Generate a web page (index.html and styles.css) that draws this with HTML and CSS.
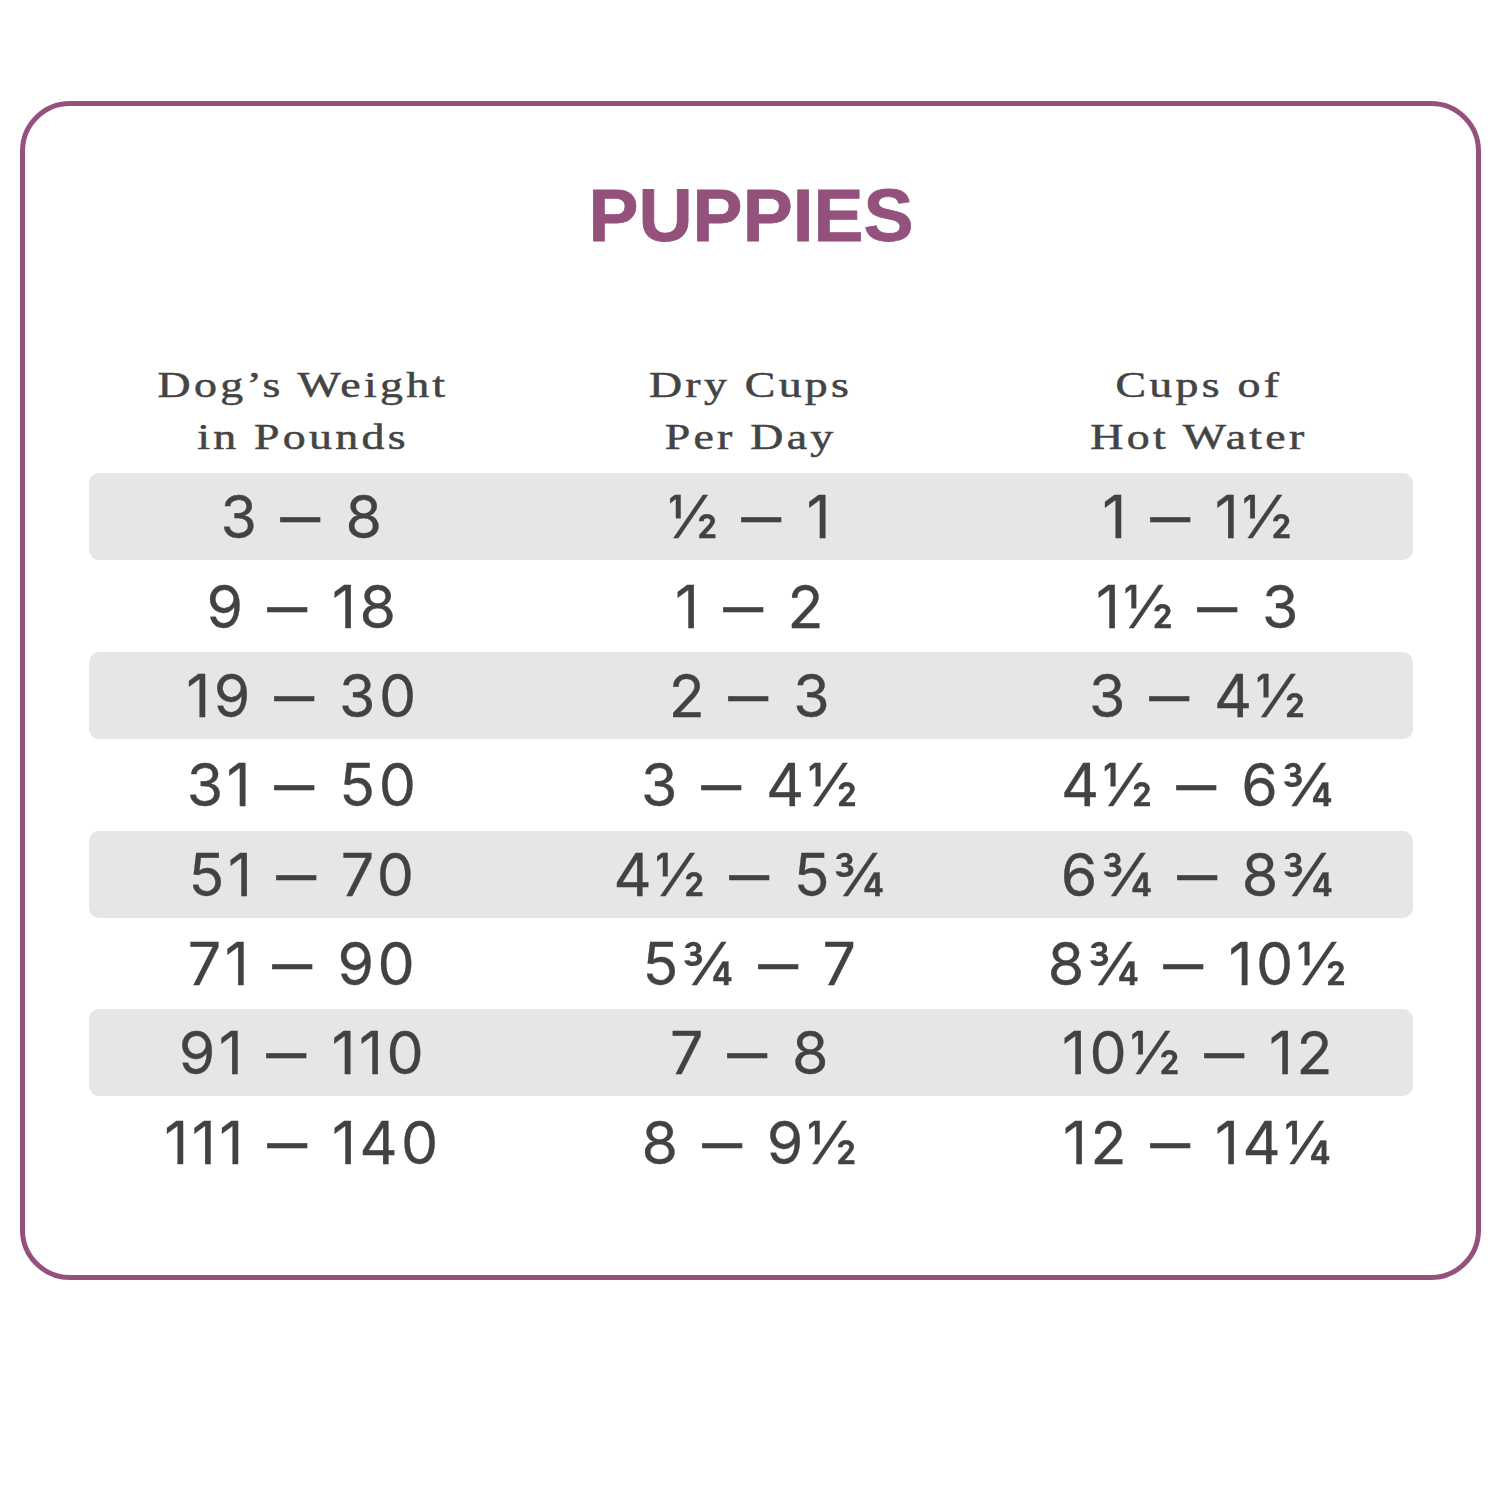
FILE: index.html
```html
<!DOCTYPE html>
<html lang="en">
<head>
<meta charset="utf-8">
<title>Puppies feeding chart</title>
<link rel="stylesheet" href="styles.css">
</head>
<body>
<section class="card">
  <h1 class="title">PUPPIES</h1>
  <div class="table">
    <div class="head">
      <div class="th"><span class="thx">Dog’s Weight<br>in Pounds</span></div>
      <div class="th"><span class="thx">Dry Cups<br>Per Day</span></div>
      <div class="th"><span class="thx">Cups of<br>Hot Water</span></div>
    </div>
    <div class="row shade"><div class="td">3 <span class="dash">–</span> 8</div><div class="td">½ <span class="dash">–</span> 1</div><div class="td">1 <span class="dash">–</span> 1½</div></div>
    <div class="row"><div class="td">9 <span class="dash">–</span> 18</div><div class="td">1 <span class="dash">–</span> 2</div><div class="td">1½ <span class="dash">–</span> 3</div></div>
    <div class="row shade"><div class="td">19 <span class="dash">–</span> 30</div><div class="td">2 <span class="dash">–</span> 3</div><div class="td">3 <span class="dash">–</span> 4½</div></div>
    <div class="row"><div class="td">31 <span class="dash">–</span> 50</div><div class="td">3 <span class="dash">–</span> 4½</div><div class="td">4½ <span class="dash">–</span> 6¾</div></div>
    <div class="row shade"><div class="td">51 <span class="dash">–</span> 70</div><div class="td">4½ <span class="dash">–</span> 5¾</div><div class="td">6¾ <span class="dash">–</span> 8¾</div></div>
    <div class="row"><div class="td">71 <span class="dash">–</span> 90</div><div class="td">5¾ <span class="dash">–</span> 7</div><div class="td">8¾ <span class="dash">–</span> 10½</div></div>
    <div class="row shade"><div class="td">91 <span class="dash">–</span> 110</div><div class="td">7 <span class="dash">–</span> 8</div><div class="td">10½ <span class="dash">–</span> 12</div></div>
    <div class="row"><div class="td">111 <span class="dash">–</span> 140</div><div class="td">8 <span class="dash">–</span> 9½</div><div class="td">12 <span class="dash">–</span> 14¼</div></div>
  </div>
</section>
</body>
</html>
```

FILE: styles.css
```css
* { box-sizing: border-box; }
html, body { margin: 0; padding: 0; background: #ffffff; }
body { width: 1500px; height: 1500px; }

.card {
  margin: 101px 19px 0 20px;
  height: 1179px;
  border: 5px solid #93517c;
  border-radius: 50px;
  padding: 72px 63px 0 64px;
  display: flex;
  flex-direction: column;
}

.title {
  margin: 0;
  text-align: center;
  font-family: "Liberation Sans", Arial, sans-serif;
  font-weight: 700;
  font-size: 75px;
  line-height: 75px;
  color: #93517c;
  -webkit-text-stroke: 0.8px #93517c;
}

.table {
  margin-top: 107px;
  display: flex;
  flex-direction: column;
  gap: 2.33px;
}

.head, .row {
  display: grid;
  grid-template-columns: 428px 468px 428px;
}

.head { margin-bottom: 7px; }

.th {
  text-align: center;
  font-family: "Liberation Serif", "Times New Roman", serif;
  font-size: 35px;
  line-height: 52px;
  color: #444444;
}
.thx {
  display: inline-block;
  letter-spacing: 2.5px;
  transform: scaleX(1.31);
  -webkit-text-stroke: 0.5px #444444;
}

.row {
  height: 87px;
  border-radius: 10px;
}
.row.shade { background: #e6e6e6; }

.td {
  text-align: center;
  font-family: "Inter", "Open Sans", sans-serif;
  font-size: 59px;
  line-height: 87px;
  letter-spacing: 3.5px;
  word-spacing: 0;
  color: #424242;
  -webkit-text-stroke: 0.3px #424242;
}
.dash {
  display: inline-block;
  margin: 0 6px;
  transform: scaleX(1.35);
}
```
